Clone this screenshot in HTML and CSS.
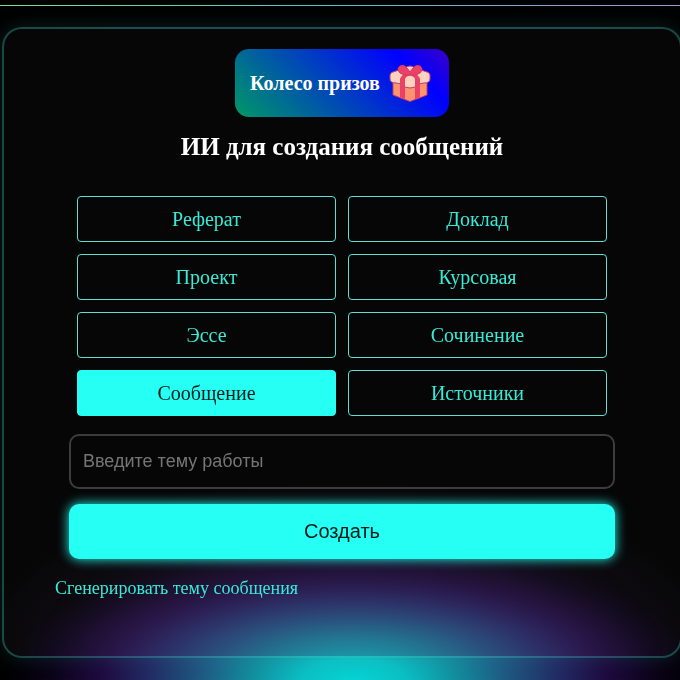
FILE: index.html
```
<!DOCTYPE html>
<html lang="ru">

<head>
    <meta charset="UTF-8">
    <meta name="viewport" content="width=device-width, initial-scale=1.0">
    <title>ИИ для создания сообщений</title>
    <link rel="stylesheet" href="styles.css">
</head>

<body>
    <div class="top-line"></div>
    <main class="card">
        <button type="button" class="prize-button">
            <span>Колесо призов</span>
            <svg class="gift" viewBox="0 0 42 38" aria-hidden="true">
                <path fill="#ff9370" stroke="#c23a70" d="M4 15H38V31L21 37.500L4 31Z"/>
                <path fill="#ffd3bd" stroke="#c23a70" d="M1 11Q1 8 7 7L16 4Q21 0 26 4L35 7Q41 8 41 11V15Q41 19 35 19L30 20Q27 24 21 24Q15 24 12 20L7 19Q1 19 1 15Z"/>
                <path fill="#ea4168" d="M19 8L22 11Q17 12 16 15V35L11 34V15Q12 11 19 8Z"/>
                <path fill="#ea4168" d="M23 8L20 11Q25 12 26 15V35L31 34V15Q30 11 23 8Z"/>
                <path fill="#ea4168" stroke="#d9375f" d="M21 11Q15 12 11 9Q7 5 11 2Q15 0 18 4L21 8L24 4Q27 0 31 2Q35 5 31 9Q27 12 21 11Z"/>
            </svg>
        </button>
        <h1>ИИ для создания сообщений</h1>
        <form class="form">
            <div class="types">
                <button type="button">Реферат</button>
                <button type="button">Доклад</button>
                <button type="button">Проект</button>
                <button type="button">Курсовая</button>
                <button type="button">Эссе</button>
                <button type="button">Сочинение</button>
                <button type="button" class="active">Сообщение</button>
                <button type="button">Источники</button>
            </div>
            <input type="text" class="topic" placeholder="Введите тему работы" aria-label="Введите тему работы">
            <button type="submit" class="submit">Создать</button>
        </form>
        <a href="#" class="generate">Сгенерировать тему сообщения</a>
    </main>
</body>

</html>
```

FILE: styles.css
```
* {
    box-sizing: border-box;
}
html {
    background: #000;
}
body {
    min-height: 100vh;
    margin: 0;
    padding-top: 5px;
    overflow: hidden;
    font-family: "Liberation Serif", "Times New Roman", serif;
    color: #fff;
    background: radial-gradient(ellipse 51% 135px at 52% 100%, #06d3d3 0%, #0bbfc4 15%, #128f9f 29%, #1e5c84 43%, #222862 60%, #1e0a3e 73%, #0a0216 88%, #000 100%) no-repeat #000;
}
.top-line {
    height: 1px;
    background: linear-gradient(90deg, #7fdc98, #5fbccb, #a98fdc);
    box-shadow: 0 0 8px rgba(64, 224, 208, 0.2);
}
.card {
    display: flex;
    flex-direction: column;
    align-items: center;
    margin: 21px -2px 22px 2px;
    padding: 20px 51px 57px;
    border: 2px solid rgba(64, 224, 208, 0.3);
    border-radius: 20px;
    background: radial-gradient(ellipse 56% 180px at 51% 100%, rgba(70, 45, 100, 0.2) 0%, rgba(70, 45, 100, 0.2) 60%, rgba(70, 45, 100, 0) 100%) rgba(255, 255, 255, 0.025);
    backdrop-filter: blur(10px);
    box-shadow: 0 0 20px rgba(64, 224, 208, 0.15);
}
button {
    cursor: pointer;
}
.prize-button {
    display: flex;
    align-items: center;
    gap: 9px;
    height: 68px;
    padding: 0 18px 0 15px;
    border: none;
    border-radius: 14px;
    font: bold 20px "Liberation Serif", "Times New Roman", serif;
    color: #fff;
    background: linear-gradient(45deg, #009966, #0000ff 80%, #3a00c8);
}
.gift {
    width: 42px;
    height: 38px;
}
h1 {
    margin: 14px 0 34px;
    font-size: 25px;
    line-height: 31px;
}
.form {
    align-self: stretch;
    padding: 0 14px;
}
.types {
    display: grid;
    grid-template-columns: 1fr 1fr;
    gap: 12px;
    margin: 0 8px 18px;
}
.types button {
    height: 46px;
    border: 1px solid #5ce0d4;
    border-radius: 4px;
    font: 20px "Liberation Serif", "Times New Roman", serif;
    color: #38ead8;
    background: transparent;
}
.types .active {
    border-color: #26fff4;
    color: #001a18;
    background: #26fff4;
}
.topic, .submit {
    display: block;
    width: 100%;
    height: 55px;
    border-radius: 10px;
    font-family: "Liberation Sans", Arial, sans-serif;
}
.topic {
    margin-bottom: 15px;
    padding: 0 12px;
    border: 2px solid #3c3c3e;
    font-size: 18px;
    color: #fff;
    background: transparent;
}
.topic::placeholder {
    color: #757575;
}
.submit {
    border: none;
    font-size: 20px;
    color: #001a18;
    background: #26fff4;
    box-shadow: 0 0 12px #26fff4;
}
.generate {
    align-self: flex-start;
    margin-top: 18px;
    font-size: 18px;
    line-height: 22px;
    color: #38ead8;
    text-decoration: none;
}
```
